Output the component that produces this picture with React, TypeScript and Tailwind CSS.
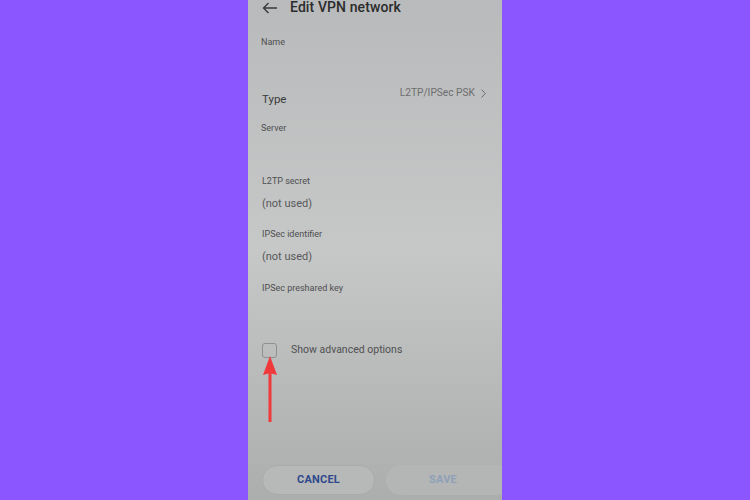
import React from 'react'

function Label({ text, className = '' }: { text: string; className?: string }) {
  return (
    <div className={`h-[12px] flex items-center text-[9px] text-[#4e4f50] ${className}`}>{text}</div>
  )
}

function Value({ text, className = '' }: { text: string; className?: string }) {
  return (
    <div className={`h-[14px] flex items-center text-[11px] text-[#58595a] ${className}`}>{text}</div>
  )
}

export default function App() {
  return (
    <div
      className="w-[750px] h-[500px] bg-[#8b55ff] flex justify-center overflow-hidden"
      style={{ fontFamily: 'Roboto, "Liberation Sans", sans-serif' }}
    >
      <div className="relative w-[254px] h-full overflow-hidden flex flex-col bg-gradient-to-b from-[#b9babb] via-[#c6c7c7] to-[#acadad]">
        <div className="flex flex-col pl-[13px] pr-[14px] flex-1">
          {/* Header */}
          <div className="h-[15px] flex items-center">
            <svg width="16" height="12" viewBox="0 0 16 12" className="ml-[1px]" fill="none" stroke="#3a3b3c" strokeWidth="1.4">
              <path d="M15 6H1.5M6.5 1L1.5 6l5 5" />
            </svg>
            <span className="ml-[12px] text-[14px] font-medium text-[#2b2c2d] tracking-[0.1px]">Edit VPN network</span>
          </div>

          <Label text="Name" className="mt-[22px]" />

          {/* Type */}
          <div className="mt-[38px] h-[20px] flex justify-between items-start">
            <div className="mt-[6px] h-[14px] flex items-center text-[11.5px] text-[#3a3b3c] ml-[1px]">Type</div>
            <div className="h-[12px] flex items-center gap-[6px] text-[10.2px] text-[#6c6d6e] mr-[2px]">
              <span>L2TP/IPSec PSK</span>
              <svg width="5" height="9" viewBox="0 0 5 9" fill="none" stroke="#6c6d6e" strokeWidth="1">
                <path d="M0.5 0.5L4.3 4.5L0.5 8.5" />
              </svg>
            </div>
          </div>

          <Label text="Server" className="mt-[16px]" />
          <Label text="L2TP secret" className="mt-[41px] ml-[1px]" />
          <Value text="(not used)" className="mt-[9px] ml-[1px]" />
          <Label text="IPSec identifier" className="mt-[18px] ml-[1px]" />
          <Value text="(not used)" className="mt-[9px] ml-[1px]" />
          <Label text="IPSec preshared key" className="mt-[19px] ml-[1px]" />

          {/* Checkbox */}
          <div className="mt-[47px] h-[16px] flex items-center">
            <div className="ml-[1px] w-[15px] h-[15px] rounded-[3px] border border-[#8e8f90]" />
            <span className="ml-[14px] text-[10.5px] text-[#505152]">Show advanced options</span>
          </div>

          {/* Buttons */}
          <div className="mt-auto mb-[5px] flex gap-[11px] pl-[1px]">
            <div className="w-[113px] h-[30px] shrink-0 rounded-full bg-[#b7b8b8] border border-[#a9aaaa] flex items-center justify-center text-[11px] font-bold text-[#2f4a8c] tracking-[0.2px]">
              CANCEL
            </div>
            <div className="w-[125px] h-[30px] shrink-0 rounded-full bg-[#b4b5b5] flex items-center justify-start pl-[43px] text-[11px] font-bold text-[#8ea1b8] tracking-[0.2px]">
              SAVE
            </div>
          </div>
        </div>

        {/* Red annotation arrow */}
        <svg className="absolute left-[14px] top-[356px]" width="16" height="68" viewBox="0 0 16 68" fill="#f0393b">
          <path d="M8 0L15 19L9.5 17.5L9.5 66L6.5 66L6.5 17.5L1 19Z" />
        </svg>
      </div>
    </div>
  )
}
